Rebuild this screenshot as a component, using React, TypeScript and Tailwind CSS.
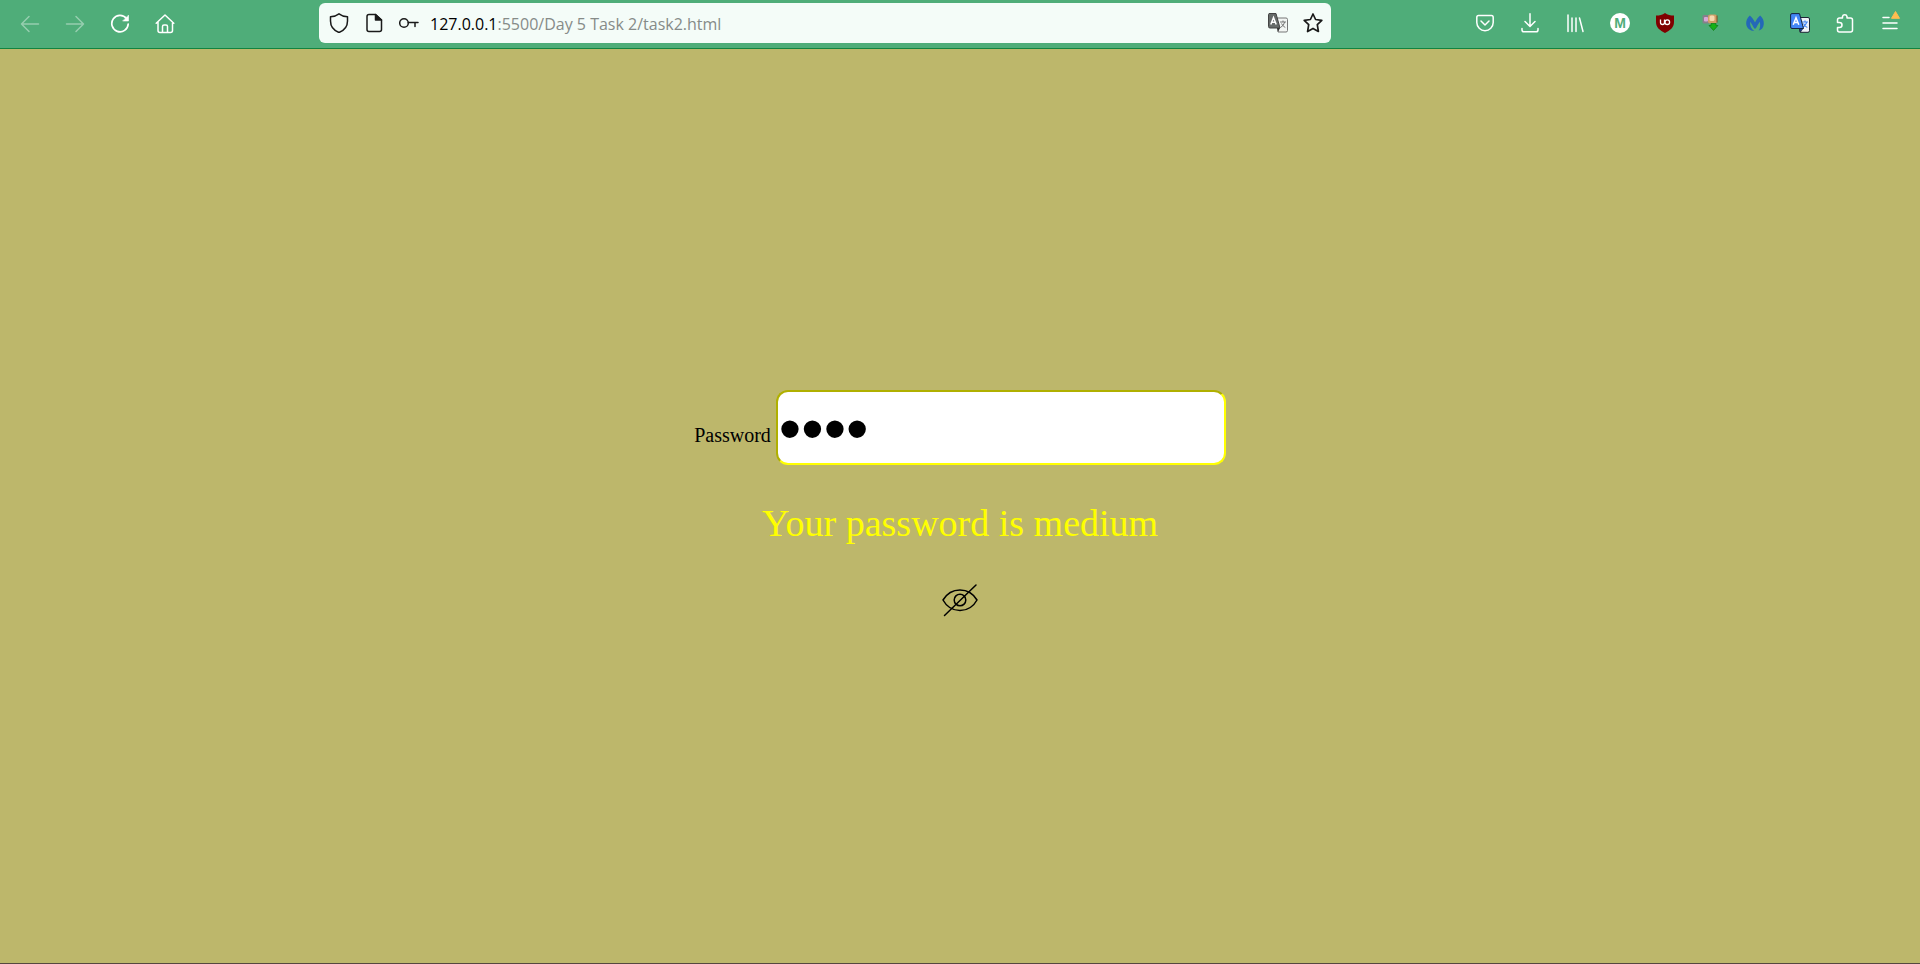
import { useState, type ReactNode } from "react";

function ToolButton({ label, disabled, children }: { label: string; disabled?: boolean; children: ReactNode }) {
  return (
    <button
      type="button"
      aria-label={label}
      disabled={disabled}
      className="flex h-10 w-11 items-center justify-center rounded text-white disabled:opacity-40"
    >
      {children}
    </button>
  );
}

function Line({ children, className = "" }: { children: ReactNode; className?: string }) {
  return (
    <svg
      viewBox="0 0 20 20"
      className={`size-5 ${className}`}
      fill="none"
      stroke="currentColor"
      strokeWidth="1.5"
      strokeLinecap="round"
      strokeLinejoin="round"
      aria-hidden="true"
    >
      {children}
    </svg>
  );
}

function Toolbar() {
  return (
    <header className="flex h-[49px] shrink-0 items-start border-b border-[#12843f] bg-[#4fad79] px-2 pt-[3px] font-['Open_Sans',sans-serif]">
      <nav aria-label="Navigation" className="flex items-center gap-px">
        <ToolButton label="Back" disabled>
          <Line><path d="M18.500 11H1.500M9 3.500L1.500 11L9 18.500" /></Line>
        </ToolButton>
        <ToolButton label="Forward" disabled>
          <Line><path d="M1.500 11H18.500M11 3.500L18.500 11L11 18.500" /></Line>
        </ToolButton>
        <ToolButton label="Reload">
          <Line>
            <path d="M16.500 5.600A8.200 8.200 0 1 0 18.200 11" strokeWidth="1.700" />
            <path d="M18.500 2.500V8H13Z" fill="currentColor" strokeWidth="0.600" />
          </Line>
        </ToolButton>
        <ToolButton label="Home">
          <Line className="overflow-visible">
            <path d="M1.200 10.300L10 2L18.800 10.300M3 9V17.500Q3 19.500 5 19.500H15.500Q17.500 19.500 17.500 17.500V9M7.500 19V13.500Q7.500 12 9 12H11Q12.500 12 12.500 13.500V19" />
          </Line>
        </ToolButton>
      </nav>
      <div className="mx-[132px] flex h-10 flex-1 items-center rounded-md bg-[#f4fcf8] pr-2 pl-2.5 text-[#1a1a1a]">
        <button type="button" aria-label="Tracking protection" className="mr-[15px]">
          <Line><path d="M10 .8C12.500 2.700 15.500 3.500 18.500 3.800V8C18.500 14 15 17.500 10 19.500C5 17.500 1.500 14 1.500 8V3.800C4.500 3.500 7.500 2.700 10 .8Z" /></Line>
        </button>
        <button type="button" aria-label="Site information" className="mr-[15px]">
          <Line>
            <path d="M11.500 1.500H5Q3 1.500 3 3.500V16.500Q3 18.500 5 18.500H15.500Q17.500 18.500 17.500 16.500V7Z" />
            <path d="M11.500 1.500V7H17.500Z" fill="currentColor" />
          </Line>
        </button>
        <button type="button" aria-label="Saved login" className="mr-[11px]">
          <Line>
            <circle cx="5" cy="10" r="4.300" />
            <path d="M9.300 9.500H19M16 9.500V13.500" />
          </Line>
        </button>
        <a href="#address" className="flex-1 pt-0.5 text-base whitespace-nowrap text-[#868b88]">
          <span className="text-black">127.0.0.1</span>:5500/Day 5 Task 2/task2.html
        </a>
        <button type="button" aria-label="Translate page" className="mr-[15px]">
          <svg viewBox="0 0 20 20" className="size-5" aria-hidden="true">
            <path d="M9 5H18Q19.500 5 19.500 6.500V17.500Q19.500 19 18 19H10Z" fill="#f2f5f3" stroke="#777" />
            <path d="M12 9H18M15 7.500V9M16.700 9Q16 12.500 12.500 14.500M13.500 10.500Q15 13.500 17.300 14.500" fill="none" stroke="#777" />
            <path d="M1 .5H8L12 15H2Q.5 15 .5 13.500V1.500Z" fill="#666b69" stroke="#444" />
            <path d="M9 15H12L10 19Z" fill="#333" />
            <path d="M2.800 11.500L5.500 4.500L8.200 11.500M3.800 9.300H7.200" fill="none" stroke="#fff" strokeWidth="1.500" />
          </svg>
        </button>
        <button type="button" aria-label="Bookmark this page">
          <Line><path d="M10 1L12.600 6.500L18.800 7.300L14.300 11.600L15.400 18.500L10 15.400L4.600 18.500L5.700 11.600L1.200 7.300L7.400 6.500Z" strokeWidth="1.700" /></Line>
        </button>
      </div>
      <nav aria-label="Extensions" className="flex items-center gap-px">
        <ToolButton label="Save to Pocket">
          <Line>
            <path d="M3.500 2.500H16.500Q18.200 2.500 18.200 4.500V9.500A8.200 8.200 0 0 1 1.800 9.500V4.500Q1.800 2.500 3.500 2.500ZM6 8L10 12L14 8" />
          </Line>
        </ToolButton>
        <ToolButton label="Downloads">
          <Line><path d="M10 .8V13M5 8.500L10 13.500L15 8.500M2 15.500V17Q2 18.800 4 18.800H16Q18 18.800 18 17V15.500" /></Line>
        </ToolButton>
        <ToolButton label="Library">
          <Line><path d="M3 2V18.500M7 5V18.500M11 5V18.500M14.500 5L18 18.500" /></Line>
        </ToolButton>
        <ToolButton label="Account">
          <span className="flex size-5 items-center justify-center rounded-full bg-white font-['Liberation_Sans',sans-serif] text-sm font-bold text-[#4fad79]">M</span>
        </ToolButton>
        <ToolButton label="Ad blocker">
          <svg viewBox="0 0 20 20" className="size-5" aria-hidden="true">
            <path d="M10 0C12.500 2 15.500 2.500 19 2.600V9C19 14.500 15 17.500 10 20C5 17.500 1 14.500 1 9V2.600C4.500 2.500 7.500 2 10 0Z" fill="#800000" />
            <path d="M5.500 6.500V9.500Q5.500 11.500 7.500 11.500T9.500 9.500V6.500" fill="none" stroke="#fff" strokeWidth="1.300" />
            <circle cx="12.300" cy="9.200" r="2.300" fill="none" stroke="#fff" strokeWidth="1.300" />
          </svg>
        </ToolButton>
        <ToolButton label="Download helper">
          <svg viewBox="0 0 20 20" className="size-5" aria-hidden="true">
            <rect x="2.500" y="2" width="7" height="8.500" rx="1.500" fill="#85818b" />
            <rect x="4" y="4" width="4" height="4.500" rx="1" fill="#d9a6d8" />
            <rect x="8" y="1.500" width="9" height="9" rx="2" fill="#d09e66" />
            <rect x="9.500" y="2.500" width="5" height="5.500" rx="1.500" fill="#f6d8ae" />
            <path d="M17 2.500V9.500" stroke="#7a4b23" />
            <path d="M11 10.500H16V12.500H18L13.500 17.500L9 12.500H11Z" fill="#16b116" stroke="#0c7a16" strokeWidth="0.700" />
          </svg>
        </ToolButton>
        <ToolButton label="Malware protection">
          <svg viewBox="0 0 20 20" className="size-5" aria-hidden="true">
            <path d="M4.800 2.500C7 4.500 9 7 10 9.500C11 7 13 4.500 15.200 2.500C18 4.800 19 8 18.800 11C18.500 14.500 16.500 17 13.800 17.500C15.300 15 15.500 12 14.800 8.800C13.300 10.800 12 13 10.800 15.500H9.200C8 13 6.700 10.800 5.200 8.800C4.700 12.500 6.200 16 9.300 18C5 18 1.600 15 1.200 11C1 8 2 4.800 4.800 2.500Z" fill="#2468b8" />
          </svg>
        </ToolButton>
        <ToolButton label="Translator">
          <svg viewBox="0 0 20 20" className="size-5" aria-hidden="true">
            <path d="M8 4.500H18Q19.500 4.500 19.500 6V17.500Q19.500 19.300 18 19.300H10Z" fill="#eef2f7" stroke="#1d2736" />
            <path d="M12 9H18M15 7.500V9M16.700 9Q16 12.500 12.500 14.500M13.500 10.500Q15 13.500 17.300 14.500" fill="none" stroke="#4386f5" strokeWidth="1.200" />
            <path d="M9.500 15.500H13L10.500 19Z" fill="#1746ad" stroke="#1d2736" strokeWidth="0.700" />
            <path d="M2 .6H9.500L13.500 15.500H2Q.6 15.500 .6 14V2Q.6 .6 2 .6Z" fill="#4386f5" stroke="#14243f" />
            <path d="M3.200 11.700L6 4.700L8.800 11.700M4.300 9.500H7.700" fill="none" stroke="#fff" strokeWidth="1.500" />
          </svg>
        </ToolButton>
        <ToolButton label="Extensions">
          <Line>
            <path d="M2.500 9V7Q2.500 5 4.500 5H7.500V3.500A2.300 2.300 0 0 1 12 3.500V5H15.500Q17.500 5 17.500 7V17Q17.500 19 15.500 19H4.500Q2.500 19 2.500 17V14.500H4.500A2.500 2.500 0 0 0 4.500 9.500H2.500Z" />
          </Line>
        </ToolButton>
        <ToolButton label="Application menu">
          <svg viewBox="0 0 20 20" className="size-5 overflow-visible" aria-hidden="true">
            <path d="M3 4.500H9M3 10H17M3 15.500H17" stroke="white" strokeWidth="1.500" strokeLinecap="round" />
            <path d="M15.500 -1.500L19.500 5.300H11.500Z" fill="#ffbd4f" stroke="#ffbd4f" strokeLinejoin="round" />
          </svg>
        </ToolButton>
      </nav>
    </header>
  );
}

export default function App() {
  const [password, setPassword] = useState("abcd");
  const [visible, setVisible] = useState(false);

  return (
    <div className="flex min-h-screen flex-col border-b border-[#54483f] bg-[#bdb76b] font-['Liberation_Serif',serif] text-black">
      <Toolbar />
      <main className="flex flex-1 flex-col items-center justify-center pb-1">
        <div className="flex items-center gap-[5px]">
          <label htmlFor="password" className="pt-4 text-xl">Password</label>
          <input
            id="password"
            type={visible ? "text" : "password"}
            value={password}
            onChange={(event) => setPassword(event.target.value)}
            className="h-[75px] w-[450px] rounded-xl border-2 border-t-[#b0b000] border-r-[#ffff00] border-b-[#ffff00] border-l-[#b0b000] bg-white px-px pt-1 font-['Liberation_Sans',sans-serif] text-[64px] outline-none"
          />
        </div>
        <p className="mt-9 text-[38px] leading-[44px] text-[#ffff00]">Your password is medium</p>
        <button
          type="button"
          aria-label={visible ? "Hide password" : "Show password"}
          onClick={() => setVisible(!visible)}
          className="mt-9"
        >
          <svg viewBox="0 0 38 38" className="size-[38px]" fill="none" stroke="black" strokeWidth="1.500" strokeLinecap="round" aria-hidden="true">
            <path d="M2 19C5 14 11 9 19 9S33 14 36 19C33 24.500 27 29.500 19 29.500S5 24.500 2 19Z" strokeLinejoin="round" />
            <circle cx="19" cy="19" r="5.800" />
            <path d="M3.500 34.500L35 4" />
          </svg>
        </button>
      </main>
    </div>
  );
}
